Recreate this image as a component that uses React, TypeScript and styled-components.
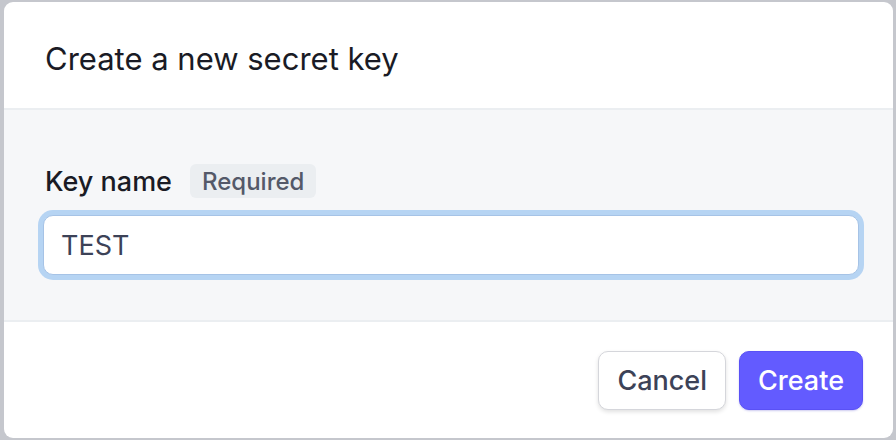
import React, { useState } from 'react';
import styled, { createGlobalStyle } from 'styled-components';

const GlobalStyle = createGlobalStyle`
  html, body {
    margin: 0;
    padding: 0;
    width: 100%;
    height: 100%;
    background: #c5c7cd;
    font-family: Inter, "Noto Sans", sans-serif;
  }
  #root {
    height: 100%;
  }
`;

const Backdrop = styled.div`
  width: 896px;
  height: 440px;
  box-sizing: border-box;
  padding: 2px 3px 2px 4px;
  background: #c5c7cd;
`;

const Modal = styled.div`
  height: 100%;
  display: flex;
  flex-direction: column;
  background: #ffffff;
  border-radius: 9px;
  overflow: hidden;
`;

const Header = styled.div`
  height: 108px;
  flex-shrink: 0;
  box-sizing: border-box;
  display: flex;
  align-items: center;
  padding: 7px 41px 0;
  border-bottom: 2px solid #ebeef1;
`;

const Title = styled.h2`
  margin: 0;
  font-size: 31px;
  font-weight: 400;
  color: #1a1b25;
`;

const Body = styled.div`
  flex: 1;
  background: #f6f7f9;
  padding: 54px 32px 0 39px;
  border-bottom: 2px solid #ebeef1;
  display: flex;
  flex-direction: column;
  gap: 17px;
`;

const LabelRow = styled.div`
  display: flex;
  align-items: center;
  gap: 18px;
  padding-left: 2px;
`;

const Label = styled.label`
  font-size: 27px;
  font-weight: 500;
  color: #1a1b25;
`;

const Badge = styled.span`
  display: inline-flex;
  align-items: center;
  height: 34px;
  padding: 0 12px;
  border-radius: 6px;
  background: #ebeef1;
  color: #545969;
  font-size: 24px;
  font-weight: 500;
`;

const Input = styled.input`
  box-sizing: border-box;
  width: 816px;
  height: 60px;
  padding: 0 17px;
  border: 1px solid #a6c3e6;
  border-radius: 10px;
  background: #ffffff;
  font-family: inherit;
  font-size: 27px;
  color: #3c4257;
  outline: none;
  box-shadow: 0 0 0 5px #b6d4f3;
  caret-color: #1a1b25;
`;

const Footer = styled.div`
  height: 116px;
  flex-shrink: 0;
  display: flex;
  align-items: center;
  justify-content: flex-end;
  gap: 13px;
  padding: 0 30px 0 0;
`;

const Button = styled.button<{ $primary?: boolean }>`
  height: 59px;
  padding: 0 18px;
  border-radius: 10px;
  font-family: inherit;
  font-size: 27px;
  font-weight: 500;
  cursor: pointer;
  border: ${(p) => (p.$primary ? '1px solid #5a51f5' : '1px solid #d5d6db')};
  background: ${(p) => (p.$primary ? '#635bff' : '#ffffff')};
  color: ${(p) => (p.$primary ? '#ffffff' : '#3c4257')};
  box-shadow: ${(p) =>
    p.$primary ? '0 1px 2px rgba(60, 50, 200, 0.25)' : '0 2px 4px rgba(0, 0, 0, 0.12)'};
`;

export default function App() {
  const [name, setName] = useState('TEST');

  return (
    <>
      <GlobalStyle />
      <Backdrop>
        <Modal>
          <Header>
            <Title>Create a new secret key</Title>
          </Header>
          <Body>
            <LabelRow>
              <Label htmlFor="key-name">Key name</Label>
              <Badge>Required</Badge>
            </LabelRow>
            <Input
              id="key-name"
              value={name}
              autoFocus
              onChange={(e) => setName(e.target.value)}
            />
          </Body>
          <Footer>
            <Button>Cancel</Button>
            <Button $primary>Create</Button>
          </Footer>
        </Modal>
      </Backdrop>
    </>
  );
}
